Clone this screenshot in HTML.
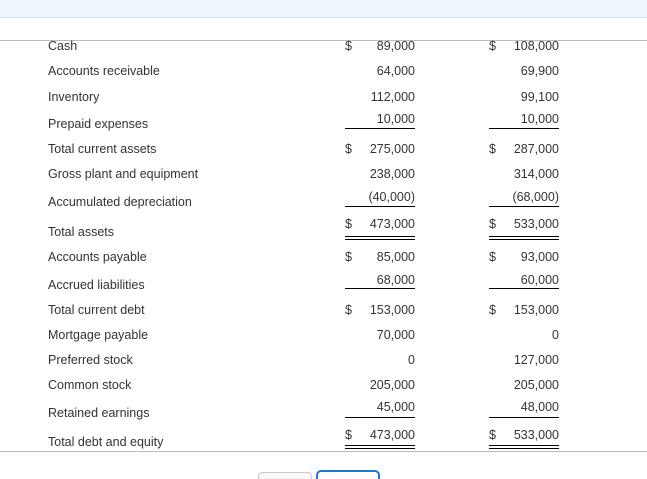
<!DOCTYPE html>
<html style="height:479px;overflow:hidden"><head><meta charset="utf-8"><style>
html,body{margin:0;height:479px;overflow:hidden}
body{width:647px;background:#fff;position:relative;font-family:"Liberation Sans",Arial,sans-serif;font-size:12.5px;color:#333}
.top{position:absolute;left:0;top:0;width:647px;height:17px;background:#eef6fd;border-bottom:1px solid #cfe3f3}
.hl{position:absolute;left:0;width:647px;height:1px;background:#bbb}
.l{position:absolute;left:48px;line-height:14px}
.d{position:absolute;line-height:14px}
.n{position:absolute;line-height:14px;text-align:right;width:100px}
.u{position:absolute;height:1px;background:#000;width:70px}
</style></head><body>
<div class="top"></div>
<div class="hl" style="top:40px"></div>
<div class="hl" style="top:451px"></div>
<div style="position:absolute;left:258px;top:472px;width:52px;height:6px;border:1px solid #ccc;border-bottom:none;border-radius:4px 4px 0 0;background:#f7f7f7"></div>
<div style="position:absolute;left:316px;top:470px;width:60px;height:7px;border:2px solid #1a7ad4;border-bottom:none;border-radius:5px 5px 0 0"></div>
<div id="c"></div>
<script>
var rows=[["Cash",39,"$ ","89,000",39,"$ ","108,000"],
["Accounts receivable",64,"","64,000",64,"","69,900"],
["Inventory",90,"","112,000",90,"","99,100"],
["Prepaid expenses",117,"","10,000",112,"","10,000"],
["Total current assets",142,"$","275,000",142,"$","287,000"],
["Gross plant and equipment",167,"","238,000",167,"","314,000"],
["Accumulated depreciation",195,"","(40,000)",190,"","(68,000)"],
["Total assets",225,"$","473,000",217,"$","533,000"],
["Accounts payable",250,"$","85,000",250,"$","93,000"],
["Accrued liabilities",278,"","68,000",273,"","60,000"],
["Total current debt",303,"$","153,000",303,"$","153,000"],
["Mortgage payable",328,"","70,000",328,"","0"],
["Preferred stock",353,"","0",353,"","127,000"],
["Common stock",378,"","205,000",378,"","205,000"],
["Retained earnings",406,"","45,000",400,"","48,000"],
["Total debt and equity",435,"$","473,000",428,"$","533,000"]];
var h="";
rows.forEach(function(r){
h+='<div class="l" style="top:'+r[1]+'px">'+r[0]+'</div>';
if(r[2])h+='<div class="d" style="left:345px;top:'+r[4]+'px">$</div><div class="d" style="left:489px;top:'+r[4]+'px">$</div>';
h+='<div class="n" style="left:315px;top:'+r[4]+'px">'+r[3]+'</div>';
h+='<div class="n" style="left:459px;top:'+r[4]+'px">'+r[6]+'</div>';
});
[128,206,236,239,288,417,445,448].forEach(function(y){
h+='<div class="u" style="left:345px;top:'+y+'px"></div><div class="u" style="left:489px;top:'+y+'px"></div>';});
document.getElementById("c").innerHTML=h;
</script>
</body></html>
